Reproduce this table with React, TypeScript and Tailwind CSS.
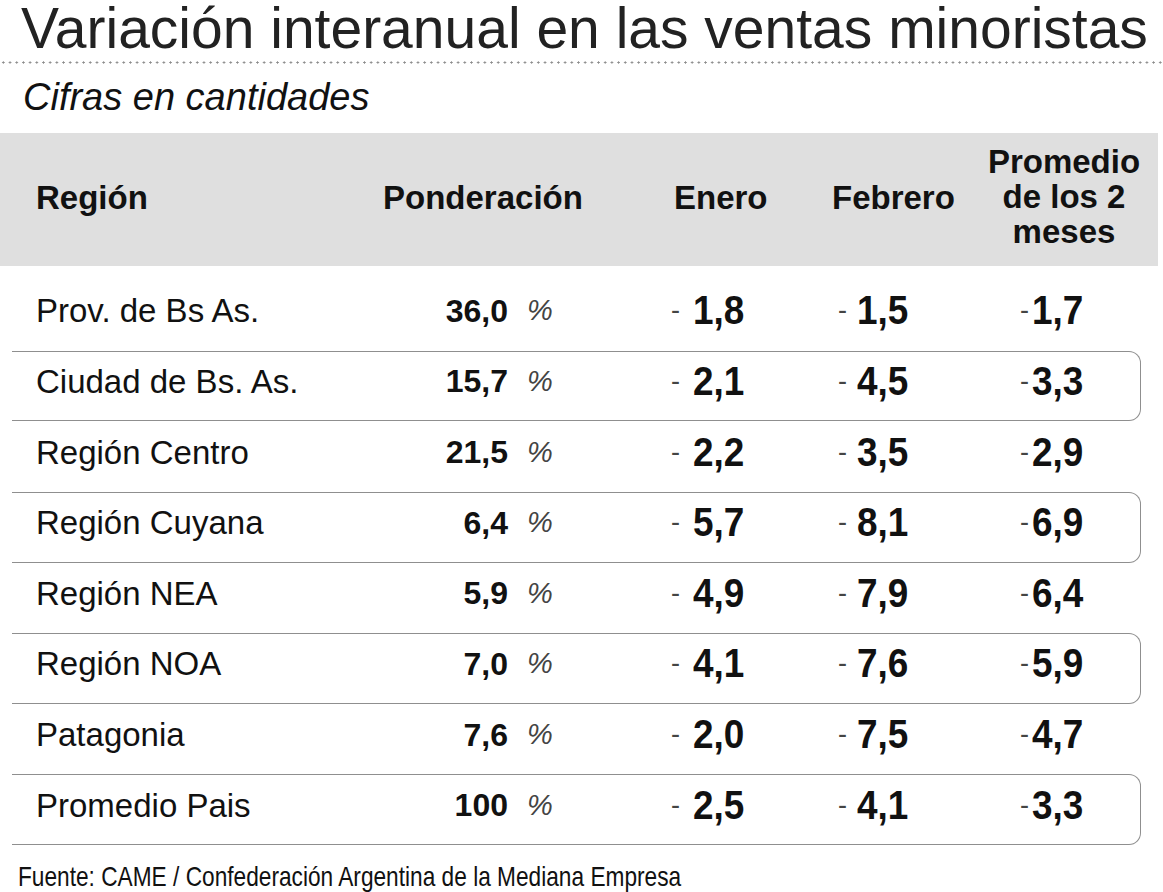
import React from 'react';

interface Row {
    region: string;
    pond: string;
    ene: string;
    feb: string;
    prom: string;
}

const ROWS: Row[] = [
    { region: 'Prov. de Bs As.',   pond: '36,0', ene: '1,8', feb: '1,5', prom: '1,7' },
    { region: 'Ciudad de Bs. As.', pond: '15,7', ene: '2,1', feb: '4,5', prom: '3,3' },
    { region: 'Región Centro',     pond: '21,5', ene: '2,2', feb: '3,5', prom: '2,9' },
    { region: 'Región Cuyana',     pond: '6,4',  ene: '5,7', feb: '8,1', prom: '6,9' },
    { region: 'Región NEA',        pond: '5,9',  ene: '4,9', feb: '7,9', prom: '6,4' },
    { region: 'Región NOA',        pond: '7,0',  ene: '4,1', feb: '7,6', prom: '5,9' },
    { region: 'Patagonia',         pond: '7,6',  ene: '2,0', feb: '7,5', prom: '4,7' },
    { region: 'Promedio Pais',     pond: '100',  ene: '2,5', feb: '4,1', prom: '3,3' },
];

// celda con guion chico + número en negrita
function Value({ value, dashWidth }: { value: string; dashWidth: string }) {
    return (
        <div className="flex items-center">
            <span className={`${dashWidth} text-[27px] leading-none text-[#444]`}>-</span>
            <span className="inline-block origin-left scale-x-[0.9] text-[41px] font-bold leading-none text-[#111]">{value}</span>
        </div>
    );
}

export default function App() {
    return (
        <div className="w-[1163px] h-[892px] bg-white font-['Liberation_Sans',Arial,sans-serif] text-[#111] overflow-hidden">
            {/* Título */}
            <h1 className="pl-[21px] text-[57px] leading-none font-normal text-[#222] whitespace-nowrap">
                Variación interanual en las ventas minoristas
            </h1>
            <div className="mt-[4px] h-[3px] w-full bg-[radial-gradient(circle,#8a8a8a_0.9px,transparent_1.3px)] bg-[length:6.7px_3px]" />
            <p className="mt-[14px] pl-[23px] text-[38px] leading-none italic">Cifras en cantidades</p>

            {/* Encabezado */}
            <div className="mt-[17px] w-[1158px] h-[133px] pb-[4px] bg-[#dfdfdf] grid grid-cols-[383px_291px_158px_148px_1fr] items-center text-[33px] font-bold leading-none">
                <div className="pl-[36px]">Región</div>
                <div>Ponderación</div>
                <div>Enero</div>
                <div>Febrero</div>
                <div className="pr-[10px] pb-[2px] text-center leading-[35px]">
                    Promedio<br />de los 2<br />meses
                </div>
            </div>

            {/* Filas */}
            <div className="mt-[14px] ml-[12px] w-[1129px]">
                {ROWS.map((row, i) => (
                    <div
                        key={row.region}
                        className={`h-[70.625px] grid grid-cols-[388px_260px_166px_174px_1fr] items-center pb-[9px] ${
                            i % 2 === 1 ? 'border-y-[1.5px] border-r-[1.5px] border-[#8f8f8f] rounded-r-[12px]' : ''
                        }`}
                    >
                        <div className="pl-[24px] text-[33px] leading-none">{row.region}</div>
                        <div className="flex items-center">
                            <span className="w-[108px] text-right text-[32px] font-bold leading-none">{row.pond}</span>
                            <span className="ml-[19px] text-[29px] italic leading-none text-[#444]">%</span>
                        </div>
                        <div className="pl-[11px]">
                            <Value value={row.ene} dashWidth="w-[22px]" />
                        </div>
                        <div className="pl-[12px]">
                            <Value value={row.feb} dashWidth="w-[19px]" />
                        </div>
                        <div className="pl-[20px]">
                            <Value value={row.prom} dashWidth="w-[12px]" />
                        </div>
                    </div>
                ))}
            </div>

            {/* Fuente */}
            <p className="mt-[18px] pl-[18px] text-[28px] leading-none whitespace-nowrap">
                <span className="inline-block origin-left scale-x-[0.81]">
                    Fuente: CAME / Confederación Argentina de la Mediana Empresa
                </span>
            </p>
        </div>
    );
}
